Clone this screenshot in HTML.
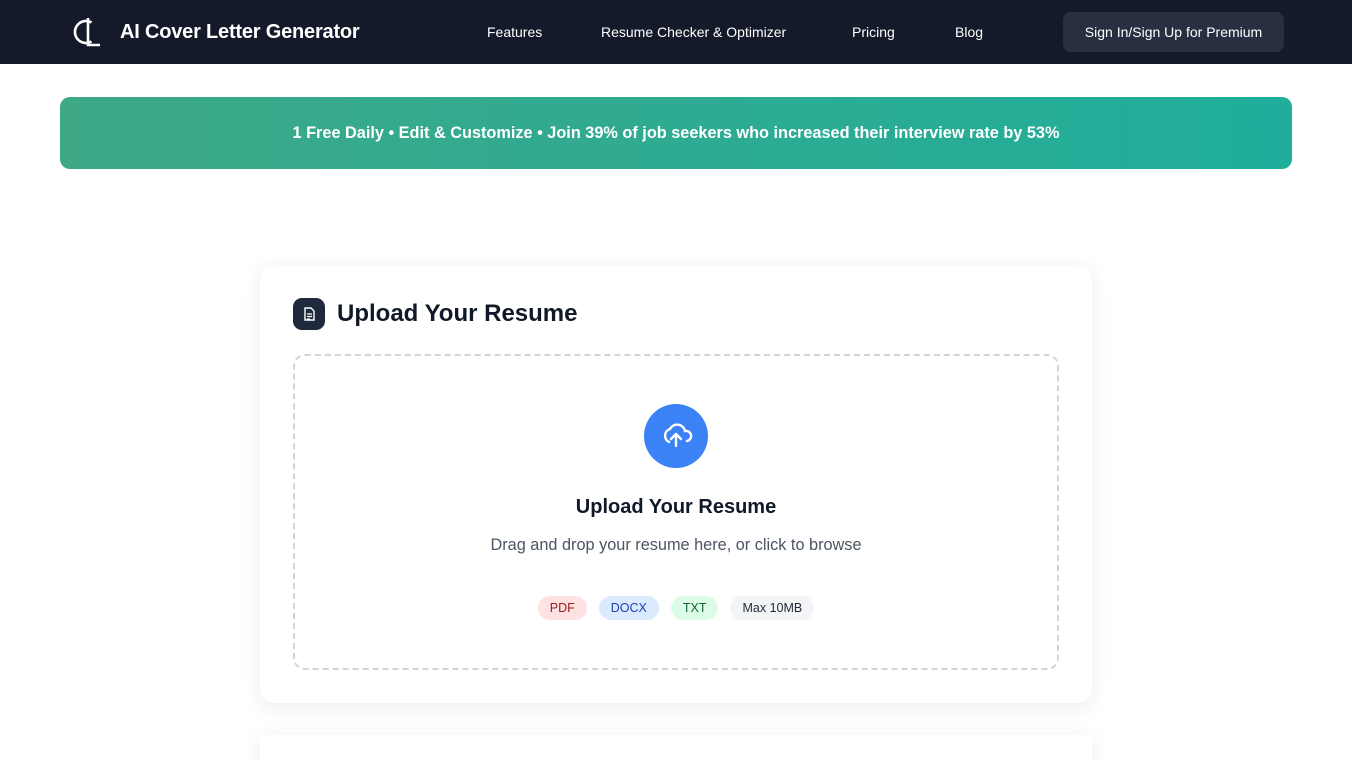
<!DOCTYPE html>
<html><head><meta charset="utf-8"><style>
*{box-sizing:border-box;margin:0;padding:0}
html,body{width:1352px;height:760px;overflow:hidden}
body{background:#fff;font-family:"Liberation Sans",sans-serif;color:#111827;position:relative}
.nav{height:64px;background:#141a2a;position:relative;color:#fff}
.logo{position:absolute;left:72px;top:14px}
.brand{position:absolute;left:120px;top:21px;font-size:20px;font-weight:bold;letter-spacing:-0.2px}
.nav a{position:absolute;top:24px;font-size:14px;color:#fff;text-decoration:none}
.btn{position:absolute;left:1063px;top:12px;width:221px;height:40px;background:#272f40;border-radius:8px;font-size:14px;line-height:40px;text-align:center}
.banner{position:absolute;left:60px;top:97px;width:1232px;height:72px;border-radius:10px;background:linear-gradient(90deg,#3ea887,#1fae9c);color:#fff;font-weight:bold;font-size:16.3px;text-align:center;line-height:72px}
.card{position:absolute;left:260px;top:265px;width:832px;height:438px;background:#fff;border-radius:14px;box-shadow:0 4px 20px rgba(0,0,0,.08)}
.card2{position:absolute;left:260px;top:735px;width:832px;height:40px;background:#fff;box-shadow:0 4px 20px rgba(0,0,0,.08)}
.ic{position:absolute;left:33px;top:33px;width:32px;height:32px;border-radius:9px;background:#1e293b}
.h{position:absolute;left:77px;top:35px;font-size:24px;font-weight:bold}
.drop{position:absolute;left:33px;top:89px;width:766px;height:316px;border:2px dashed #d1d5db;border-radius:12px;text-align:center}
.circ{position:absolute;left:349px;top:48px;width:64px;height:64px;border-radius:50%;background:#3b82f6}
.t1{position:absolute;left:0;right:0;top:140px;font-size:20px;font-weight:bold}
.t2{position:absolute;left:0;right:0;top:180px;font-size:16.3px;color:#4b5563}
.tags{position:absolute;left:0;right:0;top:240px;display:flex;justify-content:center;gap:12px}
.tag{height:24px;line-height:24px;border-radius:12px;font-size:12.5px;padding:0 12px}
</style></head><body>
<div class="nav">
<svg class="logo" width="32" height="36" viewBox="0 0 32 36"><path d="M19.5 8.5 A11 11 0 1 0 19.5 27.5" fill="none" stroke="#fff" stroke-width="2.6"/><path d="M16 4 V31 H28" fill="none" stroke="#fff" stroke-width="2.6"/></svg>
<div class="brand">AI Cover Letter Generator</div>
<a style="left:487px">Features</a><a style="left:601px">Resume Checker &amp; Optimizer</a><a style="left:852px">Pricing</a><a style="left:955px">Blog</a>
<div class="btn">Sign In/Sign Up for Premium</div>
</div>
<div class="banner">1 Free Daily • Edit &amp; Customize • Join 39% of job seekers who increased their interview rate by 53%</div>
<div class="card">
<div class="ic"><svg width="32" height="32" viewBox="0 0 32 32"><path d="M12 10h6l3 3v9h-9z" fill="none" stroke="#fff" stroke-width="1.4"/><path d="M14 16h5M14 18.5h5M14 21h3" stroke="#fff" stroke-width="1.2"/></svg></div>
<div class="h">Upload Your Resume</div>
<div class="drop">
<div class="circ"><svg width="64" height="64" viewBox="0 0 64 64"><path d="M25 38a7 7 0 0 1 1-13 8 8 0 0 1 15 2 5 5 0 0 1 2 10" fill="none" stroke="#fff" stroke-width="2.4" stroke-linecap="round"/><path d="M32 42V30M27 35l5-5 5 5" fill="none" stroke="#fff" stroke-width="2.4" stroke-linecap="round" stroke-linejoin="round"/></svg></div>
<div class="t1">Upload Your Resume</div>
<div class="t2">Drag and drop your resume here, or click to browse</div>
<div class="tags"><span class="tag" style="background:#fee2e2;color:#991b1b">PDF</span><span class="tag" style="background:#dbeafe;color:#1e40af">DOCX</span><span class="tag" style="background:#dcfce7;color:#166534">TXT</span><span class="tag" style="background:#f3f4f6;color:#1f2937">Max 10MB</span></div>
</div>
</div>
<div class="card2"></div>
</body></html>
